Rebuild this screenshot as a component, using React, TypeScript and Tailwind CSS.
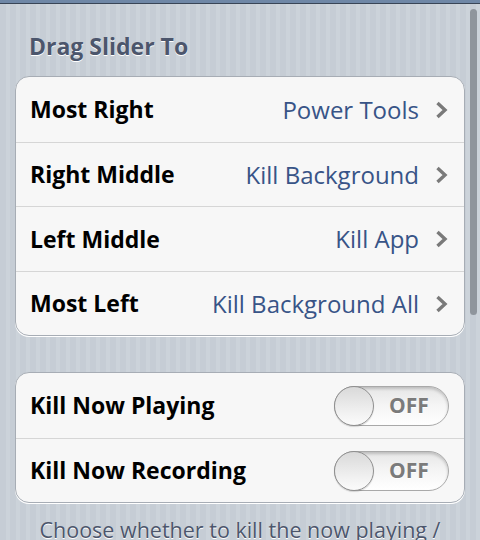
import React from "react";

const Chevron = () => (
  <svg width="13" height="18" viewBox="0 0 13 18" className="ml-[16px] shrink-0">
    <polyline points="2.5,2 10,9 2.5,16" fill="none" stroke="#7a7a7a" strokeWidth="3.4" strokeLinecap="butt" strokeLinejoin="miter" />
  </svg>
);

const NavRow = ({ label, value, first, h }: { label: string; value: string; first?: boolean; h: string }) => (
  <div className={`flex items-center pl-[14px] pr-[16px] ${h} ${first ? "" : "border-t border-[#d6d6d6]"}`}>
    <span className="font-bold text-[23px] text-black">{label}</span>
    <span className="ml-auto text-[24px] text-[#385487]">{value}</span>
    <Chevron />
  </div>
);

const Switch = () => (
  <div className="relative w-[115px] h-[40px] rounded-full border border-[#a9a9a9] bg-[linear-gradient(#e6e6e6,#f4f4f4_45%,#ffffff)] shadow-[inset_0_2px_3px_rgba(0,0,0,0.18)] flex items-center">
    <div className="absolute left-[-1px] top-[-1px] w-[40px] h-[40px] rounded-full border border-[#8f8f8f] bg-[linear-gradient(#d9d9d9,#f2f2f2_70%,#fbfbfb)] shadow-[0_1px_1px_rgba(0,0,0,0.15)]" />
    <span className="ml-[54px] font-bold text-[21px] text-[#7b7b7b] [text-shadow:0_1px_0_#ffffff]">OFF</span>
  </div>
);

const SwitchRow = ({ label, first, h }: { label: string; first?: boolean; h: string }) => (
  <div className={`flex items-center pl-[14px] pr-[15px] ${h} ${first ? "" : "border-t border-[#d6d6d6]"}`}>
    <span className="font-bold text-[23px] text-black">{label}</span>
    <div className="ml-auto">
      <Switch />
    </div>
  </div>
);

export default function App() {
  return (
    <div
      className="relative w-[480px] h-[540px] overflow-hidden bg-[repeating-linear-gradient(90deg,#c6cdd5_0px,#c6cdd5_6px,#ccd3da_6px,#ccd3da_10px)]"
      style={{ fontFamily: '"Open Sans", "Noto Sans", sans-serif' }}
    >
      <div className="h-[4px] bg-[#6f87a6] border-b border-[#394556]" />
      <div className="px-[15px]">
        <div className="mt-[28px] pl-[14px] h-[28px] leading-[28px] font-bold text-[23px] text-[#4c566c] [text-shadow:0_1px_0_#ffffff] whitespace-nowrap">
          Drag Slider To
        </div>
        <div className="mt-[16px] rounded-[14px] border border-[#a7adb5] bg-[#f7f7f7] shadow-[0_1px_0_#ffffff] overflow-hidden">
          <NavRow first label="Most Right" value="Power Tools" h="h-[65px]" />
          <NavRow label="Right Middle" value="Kill Background" h="h-[64px]" />
          <NavRow label="Left Middle" value="Kill App" h="h-[65px]" />
          <NavRow label="Most Left" value="Kill Background All" h="h-[64px]" />
        </div>
        <div className="mt-[36px] rounded-[14px] border border-[#a7adb5] bg-[#f7f7f7] shadow-[0_1px_0_#ffffff] overflow-hidden">
          <SwitchRow first label="Kill Now Playing" h="h-[65px]" />
          <SwitchRow label="Kill Now Recording" h="h-[64px]" />
        </div>
        <div className="mt-[13px] text-center text-[21.5px] leading-[28px] text-[#4c566c] [text-shadow:0_1px_0_#ffffff] whitespace-nowrap">
          Choose whether to kill the now playing /
        </div>
      </div>
      <div className="absolute right-[3px] top-[9px] w-[7px] h-[306px] rounded-full bg-[#8f959c]" />
    </div>
  );
}
